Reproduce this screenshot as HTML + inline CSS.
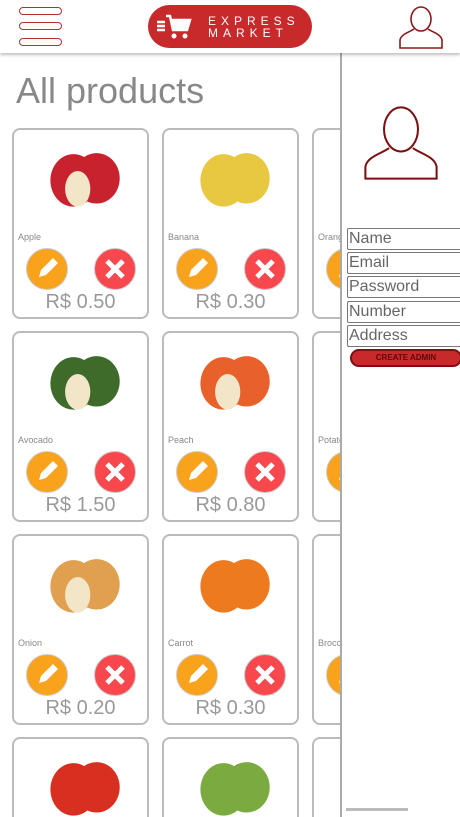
<!DOCTYPE html>
<html><head><meta charset="utf-8"><style>
*{box-sizing:border-box;margin:0;padding:0}
html{width:460px;height:817px;overflow:hidden}
body{width:460px;height:817px;overflow:hidden;background:#fff;font-family:"Liberation Sans",Arial,sans-serif;position:relative}
.hdr{position:absolute;left:0;top:0;width:460px;height:53px;background:#fff;box-shadow:0 2px 3px rgba(0,0,0,.25);z-index:3}
.bar{position:absolute;left:19px;width:43px;height:8px;border:1.5px solid #a33;border-radius:4px}
.logo{position:absolute;left:148px;top:5px;width:164px;height:43px;background:#c8292b;border-radius:22px;color:#fff;font-size:12px;letter-spacing:5px;line-height:12px}
h1{position:absolute;left:16px;top:70px;font-size:36px;font-weight:normal;color:#888}
#cards{position:absolute;left:0;top:0;width:460px;height:817px;overflow:hidden}
.card{position:absolute;width:137px;height:191px;border:2px solid #bbb;border-radius:8px;background:#fff}
.name{position:absolute;left:4px;top:102px;font-size:9px;color:#888}
.btn{position:absolute;top:118px;width:42px;height:42px;border-radius:50%;border:1px solid #ccc}
.ed{left:12px;background:#f9a21b}.dl{left:80px;background:#f8484d}
.price{position:absolute;top:161px;left:0;width:100%;text-align:center;font-size:20px;color:#999}
.img{position:absolute;left:28px;top:12px;width:84px;height:80px}
.side{position:absolute;left:340px;top:53px;width:120px;height:764px;background:#fff;border-left:2px solid #aaa;z-index:2}
.inp{position:absolute;left:5px;width:120px;height:22px;border:1px solid #777;border-radius:2px;font-size:16px;color:#666;padding-left:1px;line-height:20px}
</style></head><body>
<div class="hdr">
<div class="bar" style="top:7px"></div><div class="bar" style="top:22px"></div><div class="bar" style="top:38px"></div>
<div class="logo">
<svg style="position:absolute;left:8px;top:9px" width="36" height="26" viewBox="0 0 36 26"><g fill="none" stroke="#fff" stroke-width="2.5"><path d="M1 8h8M1 12h8M1 16h8M10 2h4l3 14h14l3-10H14"/></g><circle cx="18" cy="22" r="2.5" fill="#fff"/><circle cx="29" cy="22" r="2.5" fill="#fff"/><path d="M15 6h19l-3 9H17z" fill="#fff"/></svg>
<div style="position:absolute;left:60px;top:10px">EXPRESS<br>MARKET</div></div>
<svg style="position:absolute;left:398px;top:4px" width="46" height="46" viewBox="0 0 46 46" fill="none" stroke="#8b1a1a" stroke-width="1.6"><ellipse cx="23" cy="15" rx="10" ry="12"/><path d="M16 25c-4 3-13 5-14 11v8h42v-8c-1-6-10-8-14-11"/></svg>
</div>
<h1>All products</h1>
<div id="cards"></div>
<div class="side">
<svg style="position:absolute;left:20px;top:50px" width="78" height="80" viewBox="0 0 46 46" fill="none" stroke="#7a1010" stroke-width="1.2"><ellipse cx="23" cy="15" rx="10" ry="13"/><path d="M16 26c-4 3-13 5-14 11v7h42v-7c-1-6-10-8-14-11"/></svg>
<div class="inp" style="top:175px">Name</div>
<div class="inp" style="top:199px">Email</div>
<div class="inp" style="top:223px">Password</div>
<div class="inp" style="top:248px">Number</div>
<div class="inp" style="top:272px">Address</div>
<div style="position:absolute;left:8px;top:296px;width:112px;height:18px;background:#c8292b;border:2px solid #7a1010;border-radius:9px;font-size:8px;font-weight:bold;color:#5a0a0a;text-align:center;line-height:14px">CREATE ADMIN</div>
<div style="position:absolute;left:4px;top:755px;width:62px;height:3px;background:#bbb"></div>
</div>
<script>
var d=[["Apple","0.50","#c8222e"],["Banana","0.30","#e8c840"],["Orange","",""],["Avocado","1.50","#3e6b2a"],["Peach","0.80","#e8602a"],["Potato","",""],["Onion","0.20","#e0a050"],["Carrot","0.30","#ee7a20"],["Broccoli","",""],["","","#d83020"],["","","#7aaa40"],["","",""]];
var h="";
d.forEach(function(p,i){var r=Math.floor(i/3),c=i%3;var x=12+c*150,y=128+r*203;
h+='<div class="card" style="left:'+x+'px;top:'+y+'px">';
if(p[2])h+='<svg class="img" viewBox="0 0 80 75"><ellipse cx="30" cy="36" rx="22" ry="25" fill="'+p[2]+'"/><ellipse cx="52" cy="34" rx="22" ry="24" fill="'+p[2]+'"/><ellipse cx="34" cy="44" rx="12" ry="17" fill="#f3e6c8" opacity="'+(i==0||i==4||i==3||i==6?1:0)+'"/></svg>';
if(r<3){h+='<div class="name">'+p[0]+'</div>';
h+='<div class="btn ed"><svg width="40" height="40" viewBox="0 0 40 40"><path d="M12 28l2-7 12-12 5 5-12 12z M26 9l5 5" fill="#fff"/></svg></div>';
h+='<div class="btn dl"><svg width="40" height="40" viewBox="0 0 40 40"><path d="M12 12l16 16M28 12L12 28" stroke="#fff" stroke-width="5"/></svg></div>';
h+='<div class="price">R$ '+p[1]+'</div>';}
h+='</div>';});
document.getElementById("cards").innerHTML=h;
</script>
</body></html>
